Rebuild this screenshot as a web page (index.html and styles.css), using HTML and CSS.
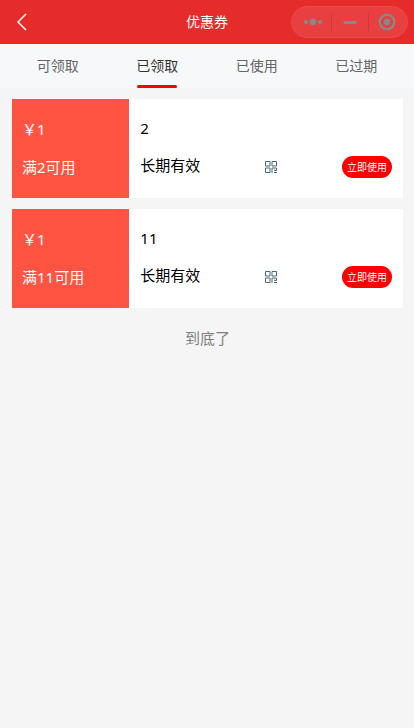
FILE: index.html
```html
<!DOCTYPE html>
<html lang="zh-CN">
<head>
<meta charset="utf-8">
<meta name="viewport" content="width=device-width, initial-scale=1">
<title>优惠券</title>
<link rel="stylesheet" href="styles.css">
</head>
<body>
<header class="navbar">
  <button class="back" type="button" aria-label="返回">
    <svg width="10" height="18" viewBox="0 0 10 18" fill="none" stroke="#fff" stroke-width="1.5"><path d="M9 1 1 9l8 8"/></svg>
  </button>
  <h1 class="title">优惠券</h1>
  <div class="capsule">
    <button type="button" aria-label="更多">
      <svg width="20" height="20" viewBox="0 0 20 20" fill="#888"><circle cx="3" cy="10" r="2.1"/><circle cx="10" cy="10" r="3.3"/><circle cx="17" cy="10" r="2.1"/></svg>
    </button>
    <button type="button" aria-label="最小化">
      <svg width="20" height="20" viewBox="0 0 20 20" stroke="#888" stroke-width="3" stroke-linecap="round"><path d="M5 10.500h10.500"/></svg>
    </button>
    <button type="button" aria-label="关闭">
      <svg width="20" height="20" viewBox="0 0 20 20"><circle cx="10" cy="10" r="7.300" fill="none" stroke="#888" stroke-width="2.300"/><circle cx="10" cy="10" r="3.200" fill="#888"/></svg>
    </button>
  </div>
</header>

<nav class="tabs">
  <a class="tab" href="#available">可领取</a>
  <a class="tab active" href="#received" aria-current="page">已领取</a>
  <a class="tab" href="#used">已使用</a>
  <a class="tab" href="#expired">已过期</a>
</nav>

<main class="list">
  <article class="coupon">
    <div class="value"><p>￥1</p><p>满2可用</p></div>
    <div class="detail">
      <h2 class="name">2</h2>
      <div class="row">
        <span class="validity">长期有效</span>
        <button class="code" type="button" aria-label="二维码">
          <svg width="12" height="12" viewBox="0 0 12 12" fill="none" stroke="#456880"><path d="M.5.500h4.500v4.500h-4.500zM7 .500h4.500v4.500h-4.500zM.5 7h4.500v4.500h-4.500zM7 12V7h4.500v2.500h-2v-1M9 11.500h3"/></svg>
        </button>
        <button class="use" type="button">立即使用</button>
      </div>
    </div>
  </article>
  <article class="coupon">
    <div class="value"><p>￥1</p><p>满11可用</p></div>
    <div class="detail">
      <h2 class="name">11</h2>
      <div class="row">
        <span class="validity">长期有效</span>
        <button class="code" type="button" aria-label="二维码">
          <svg width="12" height="12" viewBox="0 0 12 12" fill="none" stroke="#456880"><path d="M.5.500h4.500v4.500h-4.500zM7 .500h4.500v4.500h-4.500zM.5 7h4.500v4.500h-4.500zM7 12V7h4.500v2.500h-2v-1M9 11.500h3"/></svg>
        </button>
        <button class="use" type="button">立即使用</button>
      </div>
    </div>
  </article>
  <p class="end">到底了</p>
</main>
</body>
</html>
```
FILE: styles.css
```css
* {
  box-sizing: border-box;
}

body {
  margin: 0;
  background: #f5f5f5;
  color: #000;
  font: 15px/22px "Noto Sans", "Noto Sans CJK SC", sans-serif;
}

h1, h2, p {
  margin: 0;
  font-size: inherit;
  font-weight: normal;
}

button {
  padding: 0;
  border: 0;
  background: none;
  color: inherit;
  font: inherit;
  cursor: pointer;
}

svg {
  display: block;
}

.navbar {
  display: grid;
  grid-template-columns: 1fr auto 1fr;
  align-items: center;
  height: 44px;
  padding: 0 6px 0 17px;
  background: #e62b2b;
  color: #fff;
}

.back {
  justify-self: start;
}

.title {
  padding-right: 11px;
  font-size: 14px;
}

.capsule {
  display: flex;
  justify-self: end;
  height: 32px;
  padding: 0 2px;
  border: 1px solid #ea4a4a;
  border-radius: 16px;
  background: #e84040;
}

.capsule button {
  display: flex;
  align-items: center;
  justify-content: center;
  width: 37px;
}

.capsule button + button {
  background: linear-gradient(#d43636, #d43636) left center / 1px 18px no-repeat;
}

.tabs {
  display: flex;
  height: 44px;
  padding: 0 8px;
  background: #f7f8fa;
  font-size: 14px;
}

.tab {
  position: relative;
  flex: 1;
  color: #646566;
  line-height: 44px;
  text-align: center;
  text-decoration: none;
}

.tab.active {
  color: #323233;
}

.tab.active::after {
  content: "";
  position: absolute;
  bottom: 0;
  left: calc(50% - 20px);
  width: 40px;
  height: 3px;
  border-radius: 3px;
  background: #f00;
}

.list {
  padding: 11px 11px 0 12px;
}

.coupon {
  display: flex;
  margin-bottom: 11px;
  background: #fff;
}

.value {
  display: flex;
  flex-direction: column;
  gap: 16px;
  width: 30%;
  padding: 19px 10px 20px;
  background: #ff5442;
  color: #fff;
}

.detail {
  flex: 1;
  padding: 18px 11px;
}

.name {
  margin-bottom: 15px;
}

.row {
  display: grid;
  grid-template-columns: 1fr auto 1fr;
  align-items: start;
}

.code {
  padding: 7px 0 0 10px;
}

.use {
  justify-self: end;
  width: 50px;
  height: 22px;
  margin-top: 2px;
  border-radius: 11px;
  background: #f00;
  color: #fff;
  font-size: 10px;
}

.end {
  padding-top: 8px;
  color: #808080;
  text-align: center;
}
```
